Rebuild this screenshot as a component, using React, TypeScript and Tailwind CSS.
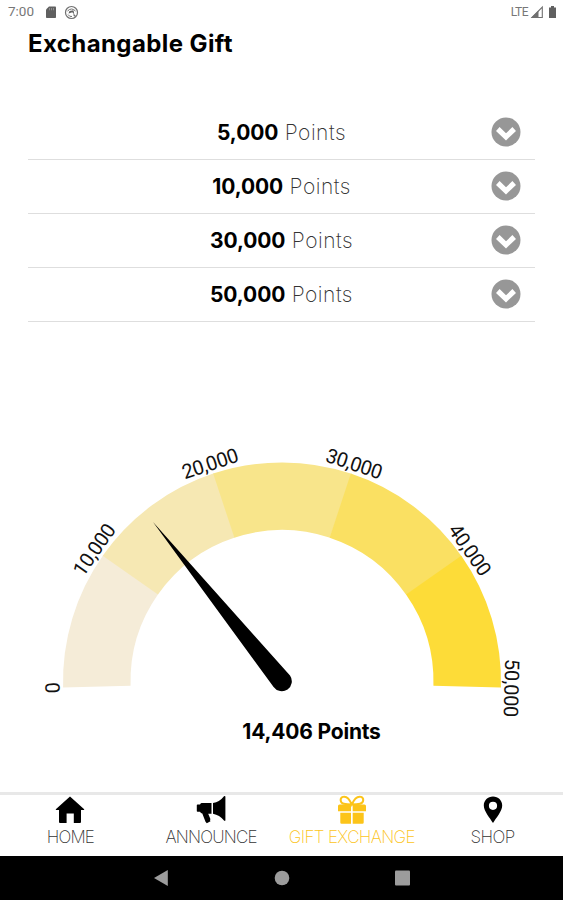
import clsx from "clsx";

const tiers = ["5,000", "10,000", "30,000", "50,000"];

const segments = ["#f5ecd8", "#f6e8b3", "#f8e58b", "#fae062", "#fddc38"];
const ticks = ["0", "10,000", "20,000", "30,000", "40,000", "50,000"];

// Gauge geometry, angles in degrees clockwise from the left
const CX = 282;
const CY = 261.5;
const OUTER = 219;
const INNER = 151.5;
const START = -1.6;
const STEP = 36.64;

function point(radius: number, angle: number) {
  const rad = (angle * Math.PI) / 180;
  return `${(CX - radius * Math.cos(rad)).toFixed(2)} ${(CY - radius * Math.sin(rad)).toFixed(2)}`;
}

function segmentPath(index: number) {
  const from = START + index * STEP;
  // small overlap so no seam shows between neighbours
  const to = from + STEP + (index < segments.length - 1 ? 0.2 : 0);
  return `M${point(OUTER, from)} A${OUTER} ${OUTER} 0 0 1 ${point(OUTER, to)} L${point(INNER, to)} A${INNER} ${INNER} 0 0 0 ${point(INNER, from)} Z`;
}

function StatusBar() {
  return (
    <div className="flex h-6 items-center justify-between pl-2 pr-[6px] text-[#777]">
      <div className="flex items-center">
        <span className="w-[37px] font-[Roboto] text-[13.5px] leading-none">7:00</span>
        <svg width="12" height="14" viewBox="0 0 12 14" className="mr-[7px]">
          <path d="M4 1.5h6.2q.8 0 .8.8v9.9q0 .8-.8.8H1.8q-.8 0-.8-.8V4.5z" fill="#606060" />
          <path d="M4.5 3v2.3M6.5 3v2.3M8.5 3v2.3" stroke="#999" strokeWidth=".8" />
        </svg>
        <svg width="15" height="15" viewBox="0 0 15 15" fill="none" stroke="#707070">
          <circle cx="7.5" cy="7.5" r="6" strokeWidth="1.2" />
          <path d="M3.5 6q4-4 8 0M4 9.5q1.5 2.5 4 2" strokeWidth="1" />
          <path d="M4.5 8.5l1-2.500 4-.8.8 4.300-2-2.300z" fill="#606060" stroke="none" />
          <path d="M9.500 9.500l2 2" strokeWidth="1.200" />
        </svg>
      </div>
      <div className="flex items-center">
        <span className="font-[Roboto] text-[12px] leading-none tracking-[-0.5px]">LTE</span>
        <svg width="14" height="14" viewBox="0 0 14 14" className="ml-[2px] mr-[4px]">
          <path d="M2 12.5L12.3 2v10.5z" fill="none" stroke="#707070" strokeWidth="1.1" />
          <path d="M1 13L8.5 5.5V13z" fill="#707070" />
        </svg>
        <svg width="9" height="14" viewBox="0 0 9 14">
          <path d="M3 1h3v1.500h2V13H1V2.500h2z" fill="#606060" />
        </svg>
      </div>
    </div>
  );
}

function TierRow({ amount }: { amount: string }) {
  return (
    <button className="relative flex h-[54px] w-full items-center justify-center border-b border-[#dedede] text-[21px]">
      <span className="whitespace-pre">
        <span className="font-bold tracking-[-0.1px]">{amount}</span>
        <span className="font-extralight tracking-[0.5px] text-[#333]"> Points</span>
      </span>
      <svg width="30" height="30" viewBox="0 0 30 30" className="absolute right-[14px] top-[11px]">
        <circle cx="15" cy="15" r="14.5" fill="#979797" />
        <path d="M6.800 12l8.200 7.800 8.200-7.800" fill="none" stroke="#fff" strokeWidth="5.200" />
      </svg>
    </button>
  );
}

function Gauge() {
  return (
    <svg width="563" height="302" viewBox="0 0 563 302" className="block">
      {segments.map((color, i) => (
        <path key={color} d={segmentPath(i)} fill={color} />
      ))}
      {ticks.map((label, i) => (
        <text
          key={label}
          x={CX}
          y={CY - 222.5}
          transform={`rotate(${START + i * STEP - 90} ${CX} ${CY})`}
          className="font-[Roboto] text-[20px] tracking-[-0.4px]"
          fill="#111"
          textAnchor="middle"
        >
          {label}
        </text>
      ))}
      <path d="M153 102L290 255.500A9.800 9.800 0 1 1 273.600 267Z" />
    </svg>
  );
}

function HomeIcon() {
  return (
    <svg width="30" height="30" viewBox="0 0 30 30">
      <path d="M15 1.5L29.2 14.3q.3.8-.5.8H26V27q0 1-1 1h-6.200V18.500h-7.200V28H5q-1 0-1-1V15.100H1.300q-.8 0-.5-.8z" />
    </svg>
  );
}

function AnnounceIcon() {
  return (
    <svg width="30" height="30" viewBox="0 0 30 30">
      <path d="M.8 10.200q0-.7.700-.7H4q.5-1.500 1.500-1.500h10v10.800h-3.300l2.300 5.500-.6.700.6 1.200-3.700 2-1.300-1.500L6.300 18.500q-1.500 0-2.300-1.700H1.500q-.7 0-.7-.7zM17 8Q23.500 7 28 1.200q1.400-.9 1.400.7v23.200q0 1.400-1.400.5Q23.500 20 17 18.800z" />
    </svg>
  );
}

function GiftIcon() {
  return (
    <svg width="30" height="30" viewBox="0 0 30 30" fill="#fcc419">
      <path
        d="M14.8 9.500C12 3 9 1 6 1.900 2.500 3 3 8 6.800 8.800q3 .6 8 .7Q20 9.400 23 8.800C27 8 27.200 3 24 1.900 20.500 1 17.600 3 14.800 9.500z"
        fill="none"
        stroke="#fcc419"
        strokeWidth="2"
      />
      <path d="M2.500 9.500H14v6.800H1V11q0-1.500 1.500-1.500zM15.700 9.500h11.800q1.500 0 1.500 1.500v5.300H15.700zM3.300 17.800H14v11H4.500q-1.200 0-1.200-1.200zM15.700 17.800h11v9.800q0 1.200-1.200 1.200h-9.800z" />
    </svg>
  );
}

function ShopIcon() {
  return (
    <svg width="30" height="30" viewBox="0 0 30 30">
      <path
        fillRule="evenodd"
        d="M15 1.500c5.200 0 9.200 3.900 9.200 8.900C24.200 16.300 17.800 23 15 28 12.200 23 5.800 16.300 5.800 10.400c0-5 4-8.900 9.200-8.900zm0 5.200a4.100 4.100 0 1 0 0 8.200 4.100 4.100 0 0 0 0-8.200z"
      />
    </svg>
  );
}

const tabs = [
  { label: "HOME", Icon: HomeIcon, spacing: "tracking-[-0.8px]" },
  { label: "ANNOUNCE", Icon: AnnounceIcon, spacing: "tracking-[-0.8px]" },
  { label: "GIFT EXCHANGE", Icon: GiftIcon, spacing: "tracking-[-0.65px]", active: true },
  { label: "SHOP", Icon: ShopIcon, spacing: "tracking-[-0.6px]" },
];

function TabBar() {
  return (
    <nav className="grid h-[64px] grid-cols-4 border-t-[3px] border-[#e8e8e8]">
      {tabs.map(({ label, Icon, spacing, active }) => (
        <a key={label} className="flex flex-col items-center">
          <Icon />
          <span
            className={clsx(
              "mt-px whitespace-nowrap text-[17px] font-extralight leading-[22px]",
              spacing,
              active ? "text-[#fcc419]" : "text-[#333]"
            )}
          >
            {label}
          </span>
        </a>
      ))}
    </nav>
  );
}

function SystemNav() {
  return (
    <div className="flex h-[44px] items-center justify-center bg-black">
      <svg width="260" height="18" viewBox="0 0 260 18" fill="#9c9c9c">
        <path d="M2 9L15.800 1v16z" />
        <circle cx="130" cy="9" r="7.300" />
        <rect x="243" y="1.500" width="15" height="15" rx="1" />
      </svg>
    </div>
  );
}

export default function App() {
  return (
    <div className="flex h-[900px] w-[563px] flex-col overflow-hidden bg-white font-[Inter,sans-serif] text-black">
      <StatusBar />
      <h1 className="ml-[28px] mt-[3px] h-[34px] text-[24px] font-bold leading-[34px] tracking-[0.4px]">
        Exchangable Gift
      </h1>
      <div className="mx-[28px] mt-[45px]">
        {tiers.map((amount) => (
          <TierRow key={amount} amount={amount} />
        ))}
      </div>
      <div className="mt-[98px]">
        <Gauge />
      </div>
      <p className="ml-[60px] mt-[-6px] text-center text-[21px] font-bold leading-8 tracking-[-0.2px]">
        14,406 Points
      </p>
      <div className="mt-auto">
        <TabBar />
        <SystemNav />
      </div>
    </div>
  );
}
